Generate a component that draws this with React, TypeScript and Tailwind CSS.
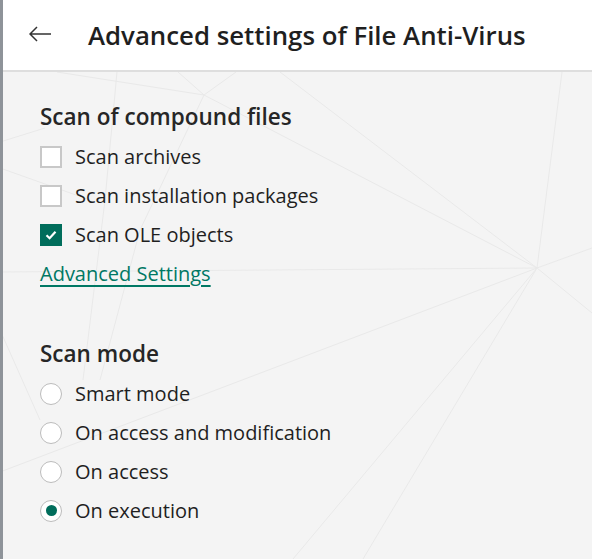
const font = { fontFamily: '"Open Sans", "Noto Sans", sans-serif' };

const lines: [number, number, number, number][] = [
  [57, 72, 204, 95],
  [178, 72, 204, 95],
  [236, 72, 204, 95],
  [204, 95, 537, 268],
  [204, 95, 140, 230],
  [140, 230, 100, 380],
  [117, 72, 105, 200],
  [105, 200, 83, 380],
  [0, 142, 45, 128],
  [0, 168, 90, 200],
  [0, 272, 537, 268],
  [280, 72, 537, 268],
  [562, 72, 537, 268],
  [592, 248, 537, 268],
  [592, 313, 537, 268],
  [0, 472, 537, 268],
  [537, 268, 293, 559],
  [537, 268, 363, 559],
  [0, 330, 40, 420],
];

const checks = [
  { label: "Scan archives", on: false },
  { label: "Scan installation packages", on: false },
  { label: "Scan OLE objects", on: true },
];

const modes = [
  { label: "Smart mode", on: false },
  { label: "On access and modification", on: false },
  { label: "On access", on: false },
  { label: "On execution", on: true },
];

function Checkbox({ on }: { on: boolean }) {
  if (on) {
    return (
      <span className="flex h-[22px] w-[22px] shrink-0 items-center justify-center bg-[#006d5b]">
        <svg width="14" height="14" viewBox="0 0 14 14">
          <path d="M2.5 7.2 L5.6 10.2 L11.5 3.8" fill="none" stroke="white" strokeWidth="2.2" />
        </svg>
      </span>
    );
  }
  return <span className="h-[22px] w-[22px] shrink-0 border-2 border-[#c8c8c8] bg-white" />;
}

function Radio({ on }: { on: boolean }) {
  return (
    <span className="flex h-[22px] w-[22px] shrink-0 items-center justify-center rounded-full border-[1.5px] border-[#bcbcbc] bg-white">
      {on && <span className="h-[11px] w-[11px] rounded-full bg-[#006d5b]" />}
    </span>
  );
}

export default function App() {
  return (
    <div
      className="relative flex h-[559px] w-[592px] flex-col overflow-hidden border-l-[3px] border-[#8e9399] bg-[#f4f4f4] text-[#1f1f1f]"
      style={font}
    >
      <svg className="absolute left-[-3px] top-0" width="592" height="559">
        {lines.map(([x1, y1, x2, y2], i) => (
          <line key={i} x1={x1} y1={y1} x2={x2} y2={y2} stroke="#e9e9e9" strokeWidth="1" />
        ))}
      </svg>

      <header className="relative flex h-[72px] shrink-0 items-center border-b-2 border-[#dedede] bg-white pl-[26px]">
        <svg width="22" height="16" viewBox="0 0 22 16" className="mt-[-2px]">
          <path d="M1 8 H22 M8 1 L1 8 L8 15" fill="none" stroke="#333" strokeWidth="1.5" />
        </svg>
        <h1 className="ml-[37px] text-[25.8px] font-semibold leading-[32px] text-[#1f1f1f]">
          Advanced settings of File Anti-Virus
        </h1>
      </header>

      <main className="relative pl-[37px] pt-[31px]">
        <h2 className="h-[28px] whitespace-nowrap text-[22.5px] font-semibold leading-[28px] text-[#262626]">
          Scan of compound files
        </h2>
        <div className="mt-[6px]">
          {checks.map((c) => (
            <div key={c.label} className="flex h-[39px] items-center gap-[13px] text-[20px]">
              <Checkbox on={c.on} />
              <span className="whitespace-nowrap">{c.label}</span>
            </div>
          ))}
          <div className="flex h-[39px] items-center">
            <a className="text-[20px] text-[#007864] underline underline-offset-[4px]">
              Advanced Settings
            </a>
          </div>
        </div>

        <h2 className="mt-[47px] h-[28px] text-[22.5px] font-semibold leading-[28px] text-[#262626]">
          Scan mode
        </h2>
        <div className="mt-[6px]">
          {modes.map((m) => (
            <div key={m.label} className="flex h-[39px] items-center gap-[13px] text-[20px]">
              <Radio on={m.on} />
              <span className="whitespace-nowrap">{m.label}</span>
            </div>
          ))}
        </div>
      </main>
    </div>
  );
}
